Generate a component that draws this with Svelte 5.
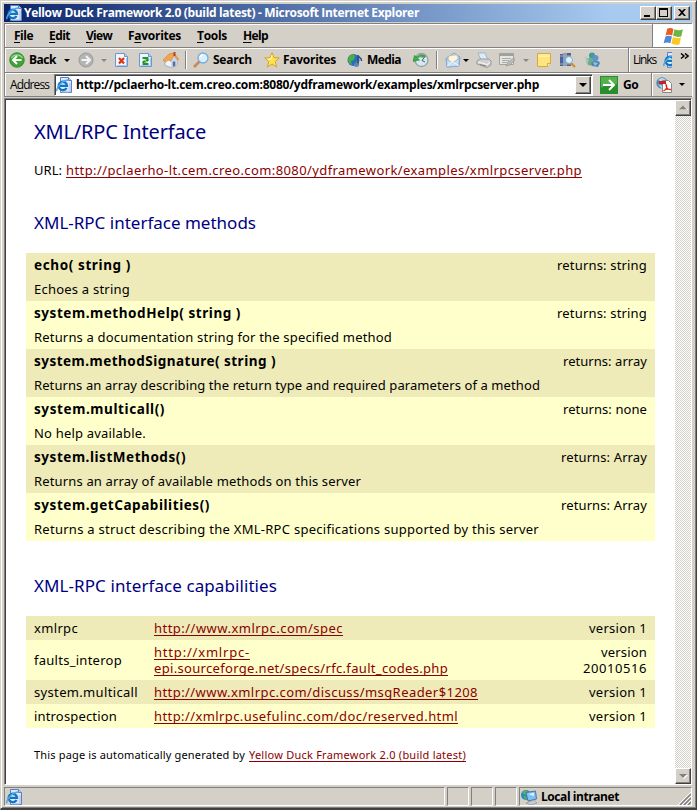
<script>
  // Spreads letters so that a label takes exactly the given width.
  function fit(node, width) {
    const natural = node.getBoundingClientRect().width;
    const count = node.textContent.length;
    node.style.letterSpacing = (width - natural) / count + 'px';
  }

  const url = 'http://pclaerho-lt.cem.creo.com:8080/ydframework/examples/xmlrpcserver.php';

  const menus = [
    ['', 'F', 'ile', 19, 35],
    ['', 'E', 'dit', 21, 37],
    ['', 'V', 'iew', 26, 42],
    ['F', 'a', 'vorites', 53, 69],
    ['', 'T', 'ools', 30, 46],
    ['', 'H', 'elp', 25, 41]
  ];

  // kind, slot width, label text, label width
  const tools = [
    ['back', 20], ['text', 35, 'Back', 27], ['arrow', 14], ['forward', 23], ['dim', 14],
    ['stop', 24], ['refresh', 24], ['home', 22], ['sep', 8],
    ['search', 20], ['text', 51, 'Search', 39],
    ['star', 19], ['text', 64, 'Favorites', 53],
    ['media', 20], ['text', 46, 'Media', 34],
    ['history', 23], ['sep', 9],
    ['mail', 18], ['arrow', 13], ['print', 23], ['edit', 24], ['dim', 14],
    ['note', 23], ['research', 25], ['messenger', 24]
  ];

  const methods = [
    ['echo( string )', 97, 'returns: string', 90, 'Echoes a string', 96],
    ['system.methodHelp( string )', 207, 'returns: string', 90, 'Returns a documentation string for the specified method', 358],
    ['system.methodSignature( string )', 242, 'returns: array', 84, 'Returns an array describing the return type and required parameters of a method', 506],
    ['system.multicall()', 131, 'returns: none', 84, 'No help available.', 112],
    ['system.listMethods()', 152, 'returns: Array', 86, 'Returns an array of available methods on this server', 327],
    ['system.getCapabilities()', 176, 'returns: Array', 86, 'Returns a struct describing the XML-RPC specifications supported by this server', 505]
  ];

  const capabilities = [
    ['xmlrpc', 44, [['http://www.xmlrpc.com/spec', 189]], [['version 1', 58]]],
    ['faults_interop', 88, [['http://xmlrpc-', 96], ['epi.sourceforge.net/specs/rfc.fault_codes.php', 294]], [['version', 46], ['20010516', 64]]],
    ['system.multicall', 104, [['http://www.xmlrpc.com/discuss/msgReader$1208', 324]], [['version 1', 58]]],
    ['introspection', 83, [['http://xmlrpc.usefulinc.com/doc/reserved.html', 304]], [['version 1', 58]]]
  ];
</script>

{#snippet iePage()}
  <svg class="icon" viewBox="0 0 16 16">
    <path d="M4.500 .5h8l3 3v12h-11z" fill="#dde8fa" stroke="#5b7fc4" />
    <path d="M12.500 .5v3h3" fill="#b9cdf0" stroke="#5b7fc4" />
    <path d="M14 6v9H6" fill="none" stroke="#9db8e8" />
    <circle cx="7" cy="8.500" r="4" fill="#d9f2ff" />
    <path d="M10.500 11A4.200 4.200 0 1 1 11 8.800H4" fill="none" stroke="#1673bd" stroke-width="2.300" />
    <path d="M1.300 14C-.8 12 5.500 3.500 12 3" fill="none" stroke="#4aa7e8" stroke-width="1.500" />
  </svg>
{/snippet}

{#snippet glyph(kind)}
  <svg class="icon" viewBox="0 0 16 16">
    {#if kind === 'back'}
      <circle cx="8" cy="8" r="7.300" fill="#3ea535" stroke="#26801f" stroke-width=".7" />
      <path d="M2.500 6a6 5 0 0 1 11 0" fill="none" stroke="#8bd681" stroke-width="1.500" />
      <path d="M12.500 8H4.500M8 4 4 8l4 4" fill="none" stroke="#fff" stroke-width="2" />
    {:else if kind === 'forward'}
      <circle cx="8" cy="8" r="7" fill="#b4b4b4" stroke="#989898" />
      <path d="M3.500 8h8M8 4l4 4-4 4" fill="none" stroke="#f4f4f4" stroke-width="2" />
    {:else if kind === 'stop' || kind === 'refresh'}
      <path d="M.5 1.500h9l3 3v10H.5z" fill="#f0f6ff" stroke="#6b96d5" />
      <path d="M9.500 1.500v3h3" fill="#b6d2f8" stroke="#6b96d5" />
      <path d="M11.500 6v7.500H2" fill="none" stroke="#a7c8f4" />
      {#if kind === 'stop'}
        <path d="m4 6 5 5.500m0-5.500-5 5.500" stroke="#dc3510" stroke-width="2.200" />
      {:else}
        <path d="M3.500 6h5v2.500M9.500 12h-5V9.500" fill="none" stroke="#239329" stroke-width="1.800" />
        <path d="M5.500 7.500h5l-2.300 2.500zM8 10.500H3L5 8z" fill="#239329" />
      {/if}
    {:else if kind === 'home'}
      <path d="M2 8v5.500l6 2 6-2V7l-4-4z" fill="#f1f3fb" stroke="#8998bb" stroke-width=".7" />
      <path d="M8 15.500V7l3-4 3 4v6.500z" fill="#cbd6ee" />
      <path d="M0 8 6 2l5-1 5 6.500-1.500.5L11 3.500 7.500 9.500 6 8l-4 2z" fill="#efa652" stroke="#c87725" stroke-width=".5" />
      <path d="M10.500 0h2v4h-2z" fill="#b6442d" />
      <path d="M9.800 9.500h2.500V14l-2.500.8z" fill="#54709e" />
    {:else if kind === 'search'}
      <path d="m7 9-6 6" stroke="#c88851" stroke-width="2.500" />
      <circle cx="10" cy="6" r="5" fill="#d7efff" stroke="#7aabdd" stroke-width="1.300" />
      <path d="M7 5a3 3 0 0 1 3-2" fill="none" stroke="#fff" stroke-width="1.500" />
    {:else if kind === 'star'}
      <path d="m8 .7 2 5 5.300.2-4.100 3.600 1.500 5.500L8 12l-4.700 3 1.500-5.500L.7 5.900 6 5.700z" fill="#ffe34e" stroke="#dba322" stroke-linejoin="round" />
      <path d="M8 3 7 7 3.500 7.500" fill="none" stroke="#fffacb" />
    {:else if kind === 'media'}
      <circle cx="6.500" cy="8" r="6" fill="#2870bd" />
      <path d="M2 4 6 2l2 2-1 4-3 1 1 4-3-2-1-4zM9 10l3-2-2 5-3 1z" fill="#4bad42" />
      <path d="M11 13V3c0 3 4 2 3.500 6" fill="none" stroke="#304d83" stroke-width="1.500" />
      <ellipse cx="9.500" cy="13" rx="2.500" ry="2" fill="#5f83bd" />
    {:else if kind === 'history'}
      <circle cx="8.500" cy="8" r="6.500" fill="#d5e8ee" stroke="#94a3a9" stroke-width="1.300" />
      <path d="M13 4.500A6 6 0 0 0 4 5L1.500 3.500 0 9.500 6.500 8l-2-1.500A4 4 0 0 1 10 5.500" fill="#40ae48" stroke="#21852e" stroke-width=".6" />
      <path d="M12 4.500 9 8.500l3 1.500" fill="none" stroke="#48606c" />
    {:else if kind === 'mail'}
      <path d="M1 6.500 9 1l6 4-1 9-12 1z" fill="#b5d4f5" stroke="#7fa4cc" />
      <path d="m4 4 8-1 1 5-5 4-5-3z" fill="#fff6da" stroke="#d3bd8b" stroke-width=".5" />
      <path d="m1.500 7 6 4 7-5-1 8-11.500 1z" fill="#c7dff8" stroke="#7fa4cc" stroke-width=".7" />
      <path d="m2 14 5-4 7 3.500" fill="none" stroke="#eef7ff" />
    {:else if kind === 'print'}
      <path d="M2 1h7l3 7H5z" fill="#dcecfd" stroke="#95abc5" stroke-width=".8" />
      <path d="m1 9 3-2h9l2 2v4l-4 2.500L1 12z" fill="#d0d0d0" stroke="#9a9a9a" />
      <path d="m2 10 9 2.500 3-2.500" fill="none" stroke="#fafafa" />
      <path d="m4 12.500 6 1.500" stroke="#818181" />
    {:else if kind === 'edit'}
      <path d="M.5 1.500h14v11H.5z" fill="#e5e5e1" stroke="#a2a3a0" />
      <path d="M1 2h13v2H1z" fill="#9da1a2" />
      <path d="M3 6.500h9M3 8.500h7M3 10.500h5" stroke="#aaa" />
      <path d="m7 14 2-4 6-4 1 2-5 5z" fill="#b9bab7" stroke="#8d8e8b" stroke-width=".6" />
    {:else if kind === 'note'}
      <path d="M.5 1.500h13v10l-3 3H.5z" fill="#ffe47b" stroke="#d7a746" />
      <path d="M13.500 11.500h-3v3" fill="#fff5bb" stroke="#d7a746" />
      <path d="M1.500 3h11M1.500 4.500h11" stroke="#fff3a5" />
    {:else if kind === 'research'}
      <path d="M0 2h3v12H0z" fill="#4264b0" /><path d="M3 1h4v13H3z" fill="#819ed5" /><path d="M7 1h4v13H7z" fill="#4c61a3" />
      <path d="M0 4h11M0 12h11" stroke="#d4a64c" />
      <path d="m11 11 4 4" stroke="#d08c36" stroke-width="2.300" />
      <circle cx="9" cy="8" r="3.500" fill="#d8f3ff" stroke="#82add0" />
    {:else if kind === 'messenger'}
      <circle cx="7" cy="3.500" r="3" fill="#3e9b91" />
      <path d="M1 8c2-3 8-3 10 0l-2 6-6-1z" fill="#72ab87" />
      <circle cx="10.500" cy="6" r="3" fill="#5c95c9" />
      <path d="M6 11c2-3 8-3 9 0l-2 4-6-1z" fill="#4c87c5" />
      <path d="m0 4 4 4-2 5zm8 6 5 1-3 3z" fill="#98c7bc" />
    {/if}
  </svg>
{/snippet}

<div class="window">
  <div class="title">
    {@render iePage()}
    <span class="caption" use:fit={395}>Yellow Duck Framework 2.0 (build latest) - Microsoft Internet Explorer</span>
    <div class="buttons">
      <i><svg viewBox="0 0 14 12"><path d="M3 8h6v2H3z" /></svg></i>
      <i><svg viewBox="0 0 14 12"><path d="M2 1h9v9H2zM3 3v6h7V3z" fill-rule="evenodd" /></svg></i>
      <i class="close"><svg viewBox="0 0 14 12"><path d="M3 2h2l2 2 2-2h2L8 5.500 11 9H9L7 7 5 9H3l3-3.500z" /></svg></i>
    </div>
  </div>

  <div class="menubar">
    <nav>
      {#each menus as [pre, key, rest, width, slot]}
        <span class="slot" style:width="{slot}px"><span use:fit={width}>{pre}<u>{key}</u>{rest}</span></span>
      {/each}
    </nav>
    <div class="brand">
      <svg viewBox="0 0 20 18">
        <path d="M4 1.500Q7 0 10 1.800L8.700 8Q5.500 6.500 2.500 8z" fill="#e85d22" />
        <path d="M11 2q4 2 8 .2L17.400 9Q13.500 10 9.600 8.300z" fill="#6eb642" />
        <path d="M2.300 9q3-1.500 6.200 0L7 15.500Q4 14 .6 15.500z" fill="#4f88d5" />
        <path d="M9.400 9.500q4 1.800 7.800.5L15.600 16.700q-3.600 1-7.600-1z" fill="#f9c928" />
      </svg>
    </div>
  </div>

  <div class="toolbar">
    <div class="tools">
      {#each tools as [kind, slot, label, width]}
        <span class="slot" style:width="{slot}px">
          {#if kind === 'text'}<span use:fit={width}>{label}</span>
          {:else if kind === 'arrow' || kind === 'dim'}<b class={kind}></b>
          {:else if kind === 'sep'}<b class="sep"></b>
          {:else}{@render glyph(kind)}{/if}
        </span>
      {/each}
    </div>
    <div class="links">
      <span class="plain" use:fit={23}>Links</span>
      <span class="cut">{@render iePage()}</span>
      <svg class="more" viewBox="0 0 9 7"><path d="m1 .5 3 2.500-3 2.500M5 .5 8 3 5 5.500" fill="none" stroke="#000" stroke-width="1.500" /></svg>
    </div>
  </div>

  <div class="address">
    <span class="plain name"><span use:fit={39}>A<u>d</u>dress</span></span>
    <div class="field">
      {@render iePage()}
      <span class="location"><span use:fit={463}>{url}</span></span>
      <i class="drop"><b class="arrow"></b></i>
    </div>
    <svg class="go" viewBox="0 0 18 18">
      <path d="M0 0h18v18H0z" fill="#278d2d" /><path d="M1 1h16v7Q8 7 1 12z" fill="#57b04f" />
      <path d="M3 9h10M9 4l5 5-5 5" fill="none" stroke="#fff" stroke-width="2" />
    </svg>
    <span class="gotext"><span use:fit={15}>Go</span></span>
    <div class="pdf">
      <svg class="icon" viewBox="0 0 16 16">
        <circle cx="6" cy="6" r="5.700" fill="#4e86b8" /><path d="M2 3q4-4 8 0L7 5 4 4zM2 7l5 2-1 3z" fill="#b8dbea" />
        <path d="M6.500 3.500h6l3 3v9h-9z" fill="#fff" stroke="#888" />
        <path d="M3 4h7v3H3z" fill="#c82020" />
        <path d="M7.500 14c3.500-2 4-5 2.500-6.500 0 3 2 5.500 5 5-3-1-5.500-.5-7.500 1.500z" fill="none" stroke="#df2419" stroke-width="1.200" />
      </svg>
      <b class="arrow"></b>
    </div>
  </div>

  <div class="view">
    <main>
      <h1><span use:fit={172}>XML/RPC Interface</span></h1>
      <p class="url"><span use:fit={28}>URL:</span><a href="#top" use:fit={516}>{url}</a></p>
      <h2><span use:fit={222}>XML-RPC interface methods</span></h2>
      <div class="table">
        {#each methods as [name, nw, ret, rw, help, hw]}
          <section>
            <div class="line"><strong use:fit={nw}>{name}</strong><span use:fit={rw}>{ret}</span></div>
            <div class="line"><span use:fit={hw}>{help}</span></div>
          </section>
        {/each}
      </div>
      <h2 class="second"><span use:fit={243}>XML-RPC interface capabilities</span></h2>
      <div class="table">
        {#each capabilities as [name, nw, links, versions]}
          <section class="cap">
            <div><span use:fit={nw}>{name}</span></div>
            <div class="stack">{#each links as [text, w]}<a href="#top" use:fit={w}>{text}</a>{/each}</div>
            <div class="stack right">{#each versions as [text, w]}<span use:fit={w}>{text}</span>{/each}</div>
          </section>
        {/each}
      </div>
      <footer><span use:fit={211}>This page is automatically generated by</span><a href="#top" use:fit={217}>Yellow Duck Framework 2.0 (build latest)</a></footer>
    </main>
    <div class="scroll">
      <i><svg viewBox="0 0 12 12"><path d="M3 8h8L7 4z" fill="#fff" /><path d="M2 7.500h8l-4-4z" fill="#808080" /></svg></i>
      <i><svg viewBox="0 0 12 12"><path d="M3 5h8L7 9z" fill="#fff" /><path d="M2 4h8L6 8z" fill="#808080" /></svg></i>
    </div>
  </div>

  <div class="status">
    <div class="panel grow">{@render iePage()}</div>
    <div class="panel"></div>
    <div class="panel"></div>
    <div class="panel"></div>
    <div class="panel zone">
      <svg class="icon" viewBox="0 0 16 16">
        <circle cx="5" cy="6" r="5" fill="#2787c9" /><path d="M1 3 5 1l2 2-3 3zM2 7l4 1-1 3z" fill="#55b94b" />
        <path d="M5 3.500 14.500 2 15.500 10 7 12z" fill="#7fc0f5" stroke="#4f74a0" />
        <path d="M7 5l6-1v3z" fill="#e1f5ff" /><path d="m5 14 8-3 3 3-6 2z" fill="#c9cbd1" stroke="#858c98" stroke-width=".6" />
      </svg>
      <span use:fit={78}>Local intranet</span>
      <svg class="grip" viewBox="0 0 13 13">
        <path d="M0 13 13 0M4 13l9-9M8 13l5-5" stroke="#fff" /><path d="m2 13 11-11M6 13l7-7M10 13l3-3" stroke="#808080" stroke-width="1.500" />
      </svg>
    </div>
  </div>
</div>

<style>
  .window {
    box-sizing: border-box;
    width: 697px;
    height: 810px;
    padding: 2px 3px 1px 2px;
    border: 1px solid #d4d0c8;
    border-right-color: #404040;
    border-bottom: 2px solid #404040;
    box-shadow: inset 1px 1px #fff, inset -1px -1px #808080;
    background: #d4d0c8;
    color: #000;
    font: bold 12px/16px "Open Sans", "Noto Sans", sans-serif;
    display: flex;
    flex-direction: column;
    overflow: hidden;
  }
  .window > div { margin-left: 1px; margin-right: 1px; flex: none; }
  span, strong, a { white-space: pre; }
  svg { display: block; flex: none; }
  .icon { width: 16px; height: 16px; }
  u { text-underline-offset: 2px; text-decoration-thickness: 1px; }
  .title {
    height: 18px;
    margin-top: 1px;
    padding: 0 2px;
    display: flex;
    align-items: center;
    color: #fff;
    background: linear-gradient(90deg, #0a246a, #a6caf0 88%);
  }
  .caption { margin-left: 2px; }
  .buttons { display: flex; margin-left: auto; }
  i {
    box-sizing: border-box;
    display: block;
    width: 16px;
    height: 14px;
    background: #d4d0c8;
    border: 1px solid #fff;
    border-right-color: #404040;
    border-bottom-color: #404040;
    box-shadow: inset -1px -1px #808080;
  }
  i svg { width: 14px; height: 12px; }
  .close { margin-left: 2px; }
  .menubar, .toolbar, .address {
    display: flex;
    box-sizing: border-box;
    border-left: 1px solid #808080;
    box-shadow: inset 1px 1px #fff, 1px 0 #fff;
  }
  .menubar { height: 24px; margin-top: 1px; border-top: 1px solid #808080; }
  nav { display: flex; align-items: center; flex: 1; padding-left: 9px; border-right: 1px solid #808080; }
  .brand { width: 39px; padding-left: 1px; margin-top: 1px; background: #fff; display: flex; align-items: center; justify-content: center; box-sizing: border-box; }
  .brand svg { width: 21px; height: 19px; }
  .slot { display: flex; align-items: center; flex: none; }
  .toolbar { height: 25px; border-top: 1px solid #808080; }
  .tools { display: flex; align-items: center; padding-left: 4px; }
  .arrow, .dim { border: 3px solid transparent; border-top-color: #000; border-bottom: 0; }
  .dim { border-top-color: #888; }
  .sep { width: 1px; height: 18px; background: #808080; border-right: 1px solid #fff; }
  .links { display: flex; align-items: center; margin-left: auto; width: 64px; border-left: 1px solid #808080; box-shadow: inset 1px 1px #fff; padding-left: 4px; box-sizing: border-box; }
  .plain { font-weight: 400; }
  .cut { width: 9px; overflow: hidden; margin-left: 7px; }
  .more { width: 9px; height: 7px; margin: 0 0 7px 8px; }
  .address { height: 25px; align-items: center; border-top: 1px solid #808080; border-bottom: 1px solid #808080; }
  .name { width: 44px; padding-left: 5px; }
  .field {
    box-sizing: border-box;
    width: 539px;
    height: 22px;
    border: 1px solid #808080;
    border-right-color: #fff;
    border-bottom-color: #fff;
    box-shadow: inset 1px 1px #404040;
    background: #fff;
    padding: 1px 1px 1px 1px;
    display: flex;
    align-items: center;
  }
  .location { margin-left: 4px; flex: 1; }
  .drop { width: 16px; height: 18px; display: flex; align-items: center; justify-content: center; }
  .drop .arrow { border-width: 4px 4px 0; }
  .go { width: 18px; height: 18px; margin-left: 7px; }
  .gotext { width: 28px; margin-left: 5px; }
  .pdf { align-self: stretch; flex: 1; display: flex; align-items: center; gap: 7px; padding-left: 4px; border-left: 1px solid #808080; box-shadow: inset 1px 0 #fff; }
  .view {
    display: flex;
    box-sizing: border-box;
    width: 688px;
    height: 687px;
    margin-top: 1px;
    border: 1px solid #808080;
    border-right-color: #fff;
    border-bottom-color: #fff;
    box-shadow: inset 1px 1px #404040;
    background: #fff;
  }
  main {
    width: 670px;
    box-sizing: border-box;
    padding: 21px 20px 0 21px;
    font: 13px/16px "Noto Sans", "Open Sans", sans-serif;
  }
  h1, h2 { margin: 0; padding-left: 8px; font-weight: 400; color: #000080; }
  h1 { font-size: 20px; line-height: 24px; }
  .url { margin: 18px 0 0; padding-left: 8px; display: flex; gap: 4px; }
  a { color: #8b0000; text-underline-offset: 2px; text-decoration-thickness: 1px; text-decoration-skip-ink: none; }
  strong { font-size: 13.500px; }
  h2 { margin-top: 35px; font-size: 17px; line-height: 20px; }
  .table { margin-top: 20px; }
  section:nth-child(odd) { background: #eeebb9; }
  section:nth-child(even) { background: #ffffcc; }
  .line { display: flex; justify-content: space-between; padding: 4px 8px; }
  .cap { display: flex; align-items: center; padding: 4px 8px; }
  .cap > div:first-child { width: 120px; }
  .stack { display: flex; flex-direction: column; align-items: flex-start; }
  .right { align-items: flex-end; margin-left: auto; }
  footer { display: flex; gap: 4px; margin-top: 19px; padding-left: 8px; font-size: 11px; }
  .scroll {
    width: 16px;
    margin-top: 1px;
    display: flex;
    flex-direction: column;
    justify-content: space-between;
    background: repeating-conic-gradient(#d4d0c8 0 25%, #fff 0 50%) 0 0 / 2px 2px;
  }
  .scroll i { height: 16px; padding: 1px; }
  .scroll svg { width: 12px; height: 12px; }
  .status { display: flex; gap: 2px; margin-top: 2px; height: 19px; }
  .panel { box-sizing: border-box; width: 22px; border: 1px solid #808080; border-right-color: #fff; border-bottom-color: #fff; display: flex; align-items: center; }
  .grow { flex: 1; padding-left: 1px; }
  .zone { width: 173px; padding-left: 1px; gap: 4px; }
  .grip { width: 13px; height: 13px; margin: 4px 0 0 auto; }
</style>
